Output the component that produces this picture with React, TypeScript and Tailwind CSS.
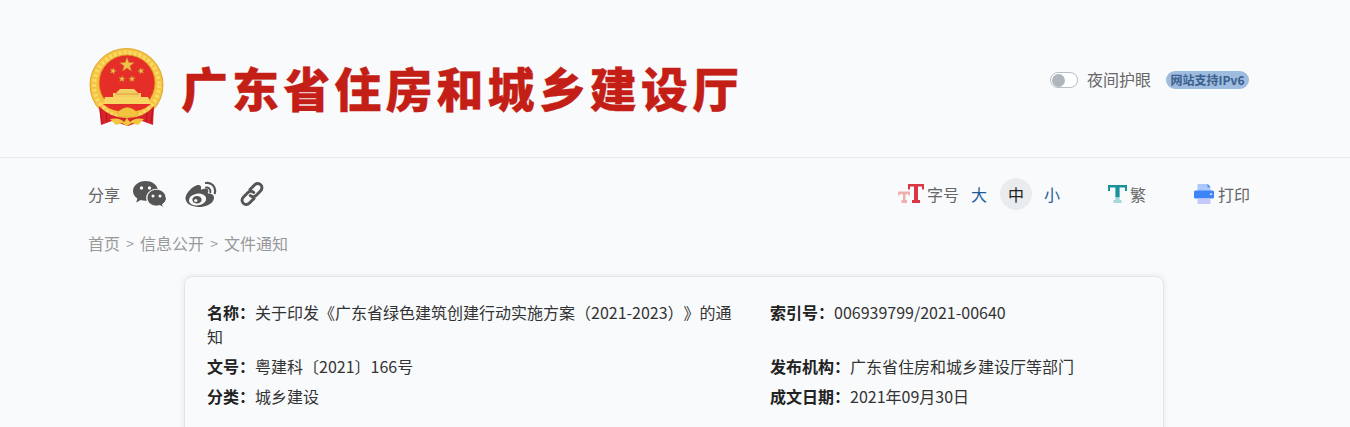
import React from "react";

const cjk = "font-['Noto_Sans_CJK_SC','Noto_Sans',sans-serif]";

function Star({ x, y, r, rot = 0 }: { x: number; y: number; r: number; rot?: number }) {
  const pts = Array.from({ length: 10 }, (_, i) => {
    const a = (Math.PI / 5) * i - Math.PI / 2 + rot;
    const d = i % 2 === 0 ? r : r * 0.4;
    return `${(x + d * Math.cos(a)).toFixed(2)},${(y + d * Math.sin(a)).toFixed(2)}`;
  }).join(" ");
  return <polygon points={pts} fill="#f1c24a" stroke="#b98a2a" strokeWidth="0.4" />;
}

function Emblem() {
  return (
    <svg width="78" height="80" viewBox="0 0 78 80" className="shrink-0">
      {/* gold ring with wheat */}
      <circle cx="38.500" cy="38" r="36.500" fill="#f4c33f" stroke="#e0a62e" strokeWidth="1" />
      <circle cx="38.500" cy="38" r="32.500" fill="none" stroke="#fbd966" strokeWidth="4" strokeDasharray="3 2" />
      <circle cx="39" cy="36" r="28" fill="#e62e29" stroke="#d99c2a" strokeWidth="0.8" />
      <Star x={39} y={18} r={7.500} />
      <Star x={25} y={24} r={3.400} rot={0.3} />
      <Star x={53} y={24} r={3.400} rot={-0.3} />
      <Star x={34} y={32} r={3.400} rot={0.15} />
      <Star x={44} y={32} r={3.400} rot={-0.15} />
      {/* gate */}
      <path d="M32 42 L46 42 L50 46 L53 46 L53 50 L25 50 L25 46 L28 46 Z" fill="#f4cf63" />
      <path d="M27 47 H51" stroke="#d8782a" strokeWidth="0.6" />
      <path d="M17 50 H60 L63 57 H15 Z" fill="#f7d664" />
      <path d="M15 57 H63 Q54 65 39 65 Q24 65 15 57 Z" fill="#e62e29" />
      {/* ribbon */}
      <path d="M11 59 Q22 71 39 71 Q56 71 66 59 L65 78 L54 74 L40 79 L24 74 L13 78 Z" fill="#d9222a" />
      <path d="M12 62 L14 76 M18 66 L19 75 M59 66 L58 75 M65 62 L63 76" stroke="#a8141c" strokeWidth="0.8" />
      <path d="M22 72 Q32 70 36 75 L39 71 L42 75 Q47 70 56 72 L50 78 L44 76 L39 79 L34 76 L28 78 Z" fill="#f3c53e" />
      <path d="M29 66 Q39 55 50 66 L47 70 H31 Z" fill="#f3c23e" stroke="#d99c2a" strokeWidth="0.5" />
    </svg>
  );
}

function WeChat() {
  return (
    <svg width="33" height="27" viewBox="0 0 33 27" className="shrink-0">
      <path d="M12.500 0C5.600 0 0 4.500 0 10c0 3.100 1.700 5.800 4.400 7.600L3.200 21.500l4.500-2.400c1.500.4 3.100.7 4.800.7.400 0 .8 0 1.200-.1-.3-.9-.4-1.800-.4-2.700C13.300 11.600 18 8 23.700 8c.4 0 .8 0 1.100.1C23.600 3.400 18.600 0 12.500 0Z" fill="#555" />
      <path d="M33 16.700c0-4.700-4.300-8.400-9.500-8.400S14 12 14 16.700s4.300 8.400 9.500 8.400c1.200 0 2.300-.2 3.400-.5l3.600 2-1-3.300c2.400-1.500 4-3.900 4-6.600Z" fill="#555" stroke="#f9fafc" strokeWidth="1" />
      <circle cx="8.500" cy="7" r="1.700" fill="#f9fafc" />
      <circle cx="16.500" cy="7" r="1.700" fill="#f9fafc" />
      <circle cx="20" cy="15" r="1.500" fill="#f9fafc" />
      <circle cx="27" cy="15" r="1.500" fill="#f9fafc" />
    </svg>
  );
}

function Weibo() {
  return (
    <svg width="32" height="27" viewBox="0 0 32 27" className="shrink-0">
      <path d="M23.500 12.600c-1.200-.3-.6-1.100-.6-1.100s1.100-1.900-.2-3.300c-1.700-1.700-5.700.2-5.700.2-1.500.5-1.100-.2-.9-1.400 0-1.500-.5-4-4.900-2.500C6.800 6 2.800 11.500 2.800 11.500.2 15 .5 17.700.5 17.700c.7 6.100 7.400 7.800 12.700 8.200 5.500.4 13-1.900 15.200-6.700 2.300-4.800-1.800-6.500-4.900-6.600Z" fill="#555" />
      <ellipse cx="12.500" cy="18.500" rx="8.700" ry="5.800" fill="#f9fafc" transform="rotate(-8 12.500 18.500)" />
      <ellipse cx="12" cy="18.800" rx="4.600" ry="3.800" fill="#555" />
      <circle cx="10.800" cy="19.500" r="1.600" fill="#f9fafc" />
      <path d="M21 6.500c2.500-.5 5 1.800 4.300 4.800" fill="none" stroke="#555" strokeWidth="2" strokeLinecap="round" />
      <path d="M21 2c5-1 10.500 3.500 8.800 10.200" fill="none" stroke="#555" strokeWidth="2.200" strokeLinecap="round" />
    </svg>
  );
}

function ChainLink() {
  return (
    <svg width="26" height="26" viewBox="0 0 26 26" fill="none" stroke="#555" strokeWidth="3" strokeLinecap="round" className="shrink-0">
      <path d="M11 8.500 15.500 4c1.900-1.900 4.500-1.900 6.200-.2s1.700 4.300-.2 6.200l-4.200 4.200c-1.900 1.900-4.500 1.900-6 .3" />
      <path d="M15 17.500 10.500 22c-1.900 1.900-4.500 1.900-6.200.2s-1.700-4.300.2-6.200l4.200-4.200c1.900-1.900 4.500-1.900 6-.3" />
    </svg>
  );
}

function FontSizeIcon() {
  return (
    <svg width="26" height="19" viewBox="0 0 26 19" className="shrink-0">
      <path d="M0 7.500h12v4h-1.500v-1.300H7.500V16h1.500v3H3.500v-3H5v-5.800H1.500v1.300H0Z" fill="#eeb0ae" />
      <path d="M10 0h16v5.500h-2V2.500h-4v13.500h2V19h-8v-3h2V2.500h-4v3h-2Z" fill="#dc3545" />
    </svg>
  );
}

function TradIcon() {
  return (
    <svg width="19" height="18" viewBox="0 0 19 18" className="shrink-0">
      <path d="M0 0h19v6h-2V2.500h-5.400V12.500H7.400V2.500H2V6H0Z" fill="#17929a" />
      <path d="M7.400 12.500h4.200V15h2v3H5.400v-3h2Z" fill="#a9d7dd" />
    </svg>
  );
}

function PrintIcon() {
  return (
    <svg width="20" height="20" viewBox="0 0 20 20" className="shrink-0">
      <path d="M3.500 1a1 1 0 0 1 1-1H14l2.500 3V8h-13Z" fill="#acc8fb" />
      <path d="M13.500 0 16.500 3.200h-3Z" fill="#3d84f7" />
      <rect x="0" y="6.500" width="20" height="8" rx="1.500" fill="#3d84f7" />
      <rect x="16" y="9.500" width="2" height="1.300" fill="#fff" />
      <path d="M3.500 14.500h13V19a1 1 0 0 1-1 1h-11a1 1 0 0 1-1-1Z" fill="#c3c9fb" />
    </svg>
  );
}

function MetaRow({ label, value }: { label: string; value: string }) {
  return (
    <div>
      <span className="font-bold text-[#222]">{label}：</span>
      <span className="text-[#333]">{value}</span>
    </div>
  );
}

export default function App() {
  return (
    <div className={`h-[427px] overflow-hidden bg-[#f9fafc] [text-spacing-trim:space-all] ${cjk}`}>
      <header className="h-[158px] border-b border-[#e9ebee] pt-[16px] pl-[88px] pr-[101px] flex items-center justify-between">
        <div className="flex items-center gap-[15px]">
          <Emblem />
          <h1 className="text-[47px] leading-none font-black tracking-[4.100px] text-[#c41f17] whitespace-nowrap [-webkit-text-stroke:0.3px_#c41f17]">
            广东省住房和城乡建设厅
          </h1>
        </div>
        <div className="flex items-center -mt-[13px]">
          <div className="w-[28px] h-[16px] rounded-full border border-[#b9bec6] bg-white flex items-center pl-px">
            <span className="w-[13px] h-[13px] rounded-full bg-[#adb5bd]" />
          </div>
          <span className="ml-[9px] text-[16px] leading-[24px] -translate-y-px text-[#666]">夜间护眼</span>
          <span className="ml-[15px] w-[83px] h-[18px] leading-[18px] text-center rounded-full bg-[#9dbce0] text-[12px] font-bold text-[#3c5f8c] whitespace-nowrap">
            网站支持IPv6
          </span>
        </div>
      </header>

      <div className="pl-[88px] pr-[100px] h-[72px] flex items-center justify-between">
        <div className="flex items-center">
          <span className="text-[16px] text-[#666] mr-[13px] -mt-px">分享</span>
          <WeChat />
          <span className="ml-[19px]"><Weibo /></span>
          <span className="ml-[22px]"><ChainLink /></span>
        </div>
        <div className="flex items-center text-[16px] text-[#666] -mt-px">
          <span className="-ml-px"><FontSizeIcon /></span>
          <span className="ml-[3px]">字号</span>
          <span className="ml-[12px] text-[#1d5c9a]">大</span>
          <span className="ml-[13px] w-[32px] h-[32px] rounded-full bg-[#e9ecef] flex items-center justify-center text-[#222]">中</span>
          <span className="ml-[12px] text-[#1d5c9a]">小</span>
          <span className="ml-[48px]"><TradIcon /></span>
          <span className="ml-[3px]">繁</span>
          <span className="ml-[48px]"><PrintIcon /></span>
          <span className="ml-[4px]">打印</span>
        </div>
      </div>

      <nav className="pl-[88px] h-[30px] -mt-[2px] flex items-center text-[16px] text-[#999]">
        <span>首页</span>
        <span className="w-[20px] text-center text-[14px]">&gt;</span>
        <span>信息公开</span>
        <span className="w-[20px] text-center text-[14px]">&gt;</span>
        <span>文件通知</span>
      </nav>

      <div className="ml-[184px] w-[980px] mt-[18px] rounded-lg border border-[#e4e5e7] shadow-[0_0_6px_rgba(0,0,0,0.08)] bg-[#f9fafc] pl-[22px] pr-[20px] pt-[23px] pb-[30px] text-[16px] leading-[24px]">
        <div className="grid grid-cols-[527px_1fr] gap-x-[36px] gap-y-[6px]">
          <MetaRow label="名称" value="关于印发《广东省绿色建筑创建行动实施方案（2021-2023）》的通知" />
          <MetaRow label="索引号" value="006939799/2021-00640" />
          <MetaRow label="文号" value="粤建科〔2021〕166号" />
          <MetaRow label="发布机构" value="广东省住房和城乡建设厅等部门" />
          <MetaRow label="分类" value="城乡建设" />
          <MetaRow label="成文日期" value="2021年09月30日" />
        </div>
      </div>
    </div>
  );
}
